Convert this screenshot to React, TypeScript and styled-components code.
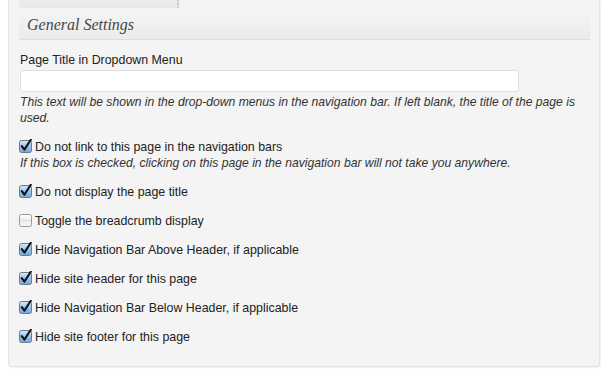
import styled, { createGlobalStyle } from "styled-components";

const GlobalStyle = createGlobalStyle`
    body {
        margin : 0;
        background : #ffffff;
        font-family : "Liberation Sans", Arial, sans-serif;
        color : #222;
    }
`;

const options = [
    { label : "Do not link to this page in the navigation bars", checked : true, note : "If this box is checked, clicking on this page in the navigation bar will not take you anywhere." },
    { label : "Do not display the page title", checked : true },
    { label : "Toggle the breadcrumb display", checked : false },
    { label : "Hide Navigation Bar Above Header, if applicable", checked : true },
    { label : "Hide site header for this page", checked : true },
    { label : "Hide Navigation Bar Below Header, if applicable", checked : true },
    { label : "Hide site footer for this page", checked : true },
];

const CheckIcon = ({ checked }: { checked: boolean }) => (
    <svg width="14" height="14" viewBox="0 0 14 14">
        <defs>
            <linearGradient id="cbBlue" x1="0" y1="0" x2="0" y2="1">
                <stop offset="0" stopColor="#d6e8fa" />
                <stop offset="0.5" stopColor="#9cc4ee" />
                <stop offset="1" stopColor="#6fa6e0" />
            </linearGradient>
            <linearGradient id="cbGrey" x1="0" y1="0" x2="0" y2="1">
                <stop offset="0" stopColor="#ffffff" />
                <stop offset="0.5" stopColor="#ececec" />
                <stop offset="1" stopColor="#f6f6f6" />
            </linearGradient>
        </defs>
        <rect x="0.5" y="1.5" width="12" height="12" rx="2" fill={checked ? "url(#cbBlue)" : "url(#cbGrey)"} stroke={checked ? "#6b7a8c" : "#9a9a9a"} />
        {checked ? (
            <path d="M2.8 7.2 L5.4 10.6 L11.8 0.8" fill="none" stroke="#111" strokeWidth="2.1" strokeLinecap="round" strokeLinejoin="round" />
        ) : (
            <line x1="1.5" y1="7.5" x2="11.5" y2="7.5" stroke="#dcdcdc" strokeWidth="1" />
        )}
    </svg>
);

const App = () => {
    return (
        <>
            <GlobalStyle />
            <StPage>
                <StPanel>
                    <StTab />
                    <StHeader>General Settings</StHeader>
                    <StBody>
                        <StField>
                            <StLabel>Page Title in Dropdown Menu</StLabel>
                            <StInput type="text" />
                            <StNote>This text will be shown in the drop-down menus in the navigation bar. If left blank, the title of the page is used.</StNote>
                        </StField>
                        {options.map((o) => (
                            <StField key={o.label}>
                                <StCheckRow>
                                    <StBox><CheckIcon checked={o.checked} /></StBox>
                                    {o.label}
                                </StCheckRow>
                                {o.note && <StNote>{o.note}</StNote>}
                            </StField>
                        ))}
                    </StBody>
                </StPanel>
            </StPage>
        </>
    );
};

export default App;

const StPage = styled.div`
    padding : 0 16px 0 8px;
    height : 387px;
    box-sizing : border-box;
`

const StPanel = styled.div`
    width : 592px;
    box-sizing : border-box;
    background-color : #f4f4f4;
    border : 1px solid #e2e2e2;
    border-top : none;
    border-radius : 0 0 4px 4px;
    box-shadow : 1px 1px 1px rgba(0, 0, 0, .06);
    padding : 0 9px 21px 10px;
`

const StTab = styled.div`
    width : 158px;
    height : 7px;
    background-color : #ebebeb;
    border-right : 2px dotted #c8c8c8;
    border-bottom : 1px solid #e6e6e6;
    margin-bottom : 1px;
`

const StHeader = styled.div`
    height : 30px;
    line-height : 31px;
    padding-left : 8px;
    background : linear-gradient(to bottom, #f5f5f5, #ebebeb);
    border-bottom : 1px solid #dedede;
    font-family : "Liberation Serif", "Times New Roman", serif;
    font-style : italic;
    font-size : 16px;
    color : #464646;
`

const StBody = styled.div`
    padding : 12px 0 0 1px;
    display : flex;
    flex-direction : column;
    gap : 13px;
`

const StField = styled.div`
    display : flex;
    flex-direction : column;
`

const StLabel = styled.div`
    font-size : 12.4px;
    line-height : 16px;
    color : #222;
`

const StInput = styled.input`
    width : 499px;
    height : 22px;
    box-sizing : border-box;
    margin : 2px 0 2px 0;
    border : 1px solid #dfdfdf;
    border-radius : 3px;
    background : #ffffff;
    padding : 0 4px;
    outline : none;
`

const StNote = styled.div`
    font-size : 12.15px;
    line-height : 16px;
    font-style : italic;
    color : #333;
    padding-right : 8px;
`

const StCheckRow = styled.label`
    display : flex;
    align-items : center;
    font-size : 12.4px;
    line-height : 16px;
    color : #222;
`

const StBox = styled.span`
    display : inline-flex;
    width : 14px;
    height : 14px;
    margin : -2px 2px 0 -1px;
`
